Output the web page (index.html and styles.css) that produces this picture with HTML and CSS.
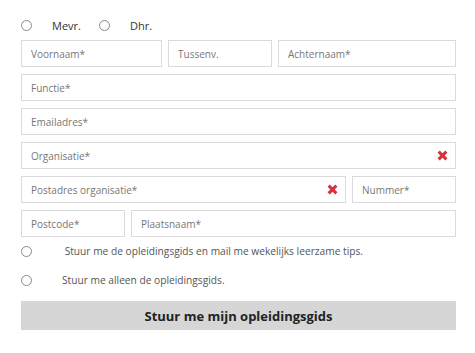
FILE: index.html
```html
<!DOCTYPE html>
<html>
<head>
    <meta charset="UTF-8">
    <meta name="viewport" content="width=device-width, initial-scale=1.0">
    <title>Opleidingsgids aanvragen</title>
    <link rel="stylesheet" href="styles.css">
</head>

<body>

    <form class="guide-form">
        <div class="gender">
            <label><input type="radio" name="aanhef" class="radio"><span>Mevr.</span></label>
            <label><input type="radio" name="aanhef" class="radio"><span>Dhr.</span></label>
        </div>

        <div class="row">
            <input type="text" class="field field-first" placeholder="Voornaam*">
            <input type="text" class="field field-small" placeholder="Tussenv.">
            <input type="text" class="field field-grow" placeholder="Achternaam*">
        </div>
        <div class="row">
            <input type="text" class="field field-grow" placeholder="Functie*">
        </div>
        <div class="row">
            <input type="text" class="field field-grow" placeholder="Emailadres*">
        </div>
        <div class="row">
            <div class="field-wrap field-grow">
                <input type="text" class="field" placeholder="Organisatie*">
                <svg class="error" viewBox="0 0 10 10"><path d="M1.5 1.5 L8.5 8.5 M8.5 1.5 L1.5 8.5"/></svg>
            </div>
        </div>
        <div class="row">
            <div class="field-wrap field-grow">
                <input type="text" class="field" placeholder="Postadres organisatie*">
                <svg class="error" viewBox="0 0 10 10"><path d="M1.5 1.5 L8.5 8.5 M8.5 1.5 L1.5 8.5"/></svg>
            </div>
            <input type="text" class="field field-small" placeholder="Nummer*">
        </div>
        <div class="row">
            <input type="text" class="field field-small" placeholder="Postcode*">
            <input type="text" class="field field-grow" placeholder="Plaatsnaam*">
        </div>

        <div class="options">
            <label class="option"><input type="radio" name="keuze" class="radio"><span>&nbsp;Stuur me de opleidingsgids en mail me wekelijks leerzame tips.</span></label>
            <label class="option"><input type="radio" name="keuze" class="radio"><span>Stuur me alleen de opleidingsgids.</span></label>
        </div>

        <button type="submit" class="submit">Stuur me mijn opleidingsgids</button>
    </form>

</body>

</html>
```

FILE: styles.css
```css
body {
    margin: 0;
    font-family: "Open Sans", "Noto Sans", Arial, sans-serif;
    background-color: #fff;
    color: #333;
}

.guide-form {
    width: 435px;
    margin-left: 21px;
    padding-top: 17px;
}

.radio {
    appearance: none;
    -webkit-appearance: none;
    width: 11px;
    height: 11px;
    margin: 0;
    border: 1px solid #8a8a8a;
    border-radius: 50%;
    background-color: #fff;
    flex-shrink: 0;
}

.gender {
    display: flex;
    align-items: center;
    height: 16px;
    margin-bottom: 7px;
    font-size: 11px;
    color: #333;
}

.gender label {
    display: flex;
    align-items: center;
    margin-right: 18px;
}

.gender label span {
    margin-left: 20px;
}

.row {
    display: flex;
    gap: 6px;
    margin-bottom: 7px;
}

.field {
    box-sizing: border-box;
    height: 27px;
    padding: 0 9px;
    border: 1px solid #dadada;
    border-radius: 0;
    font-family: inherit;
    font-size: 10px;
    color: #333;
    outline: none;
    width: 100%;
}

.field::placeholder {
    color: #777;
}

.field-first {
    width: 141px;
    flex: none;
}

.field-small {
    width: 104px;
    flex: none;
}

.field-grow {
    flex: 1;
    min-width: 0;
}

.field-wrap {
    position: relative;
}

.error {
    position: absolute;
    right: 8px;
    top: 8px;
    width: 11px;
    height: 11px;
    stroke: #d8313c;
    stroke-width: 2.8;
    fill: none;
}

.options {
    margin-top: -1px;
    font-size: 10.2px;
    color: #555;
}

.option {
    display: flex;
    align-items: center;
    height: 16px;
    margin-bottom: 13px;
}

.option span {
    margin-left: 30px;
}

.submit {
    display: block;
    width: 100%;
    height: 29px;
    margin: 0;
    border: none;
    border-radius: 0;
    background-color: #d6d6d6;
    font-family: inherit;
    font-size: 13px;
    font-weight: bold;
    color: #222;
    cursor: pointer;
}
```
